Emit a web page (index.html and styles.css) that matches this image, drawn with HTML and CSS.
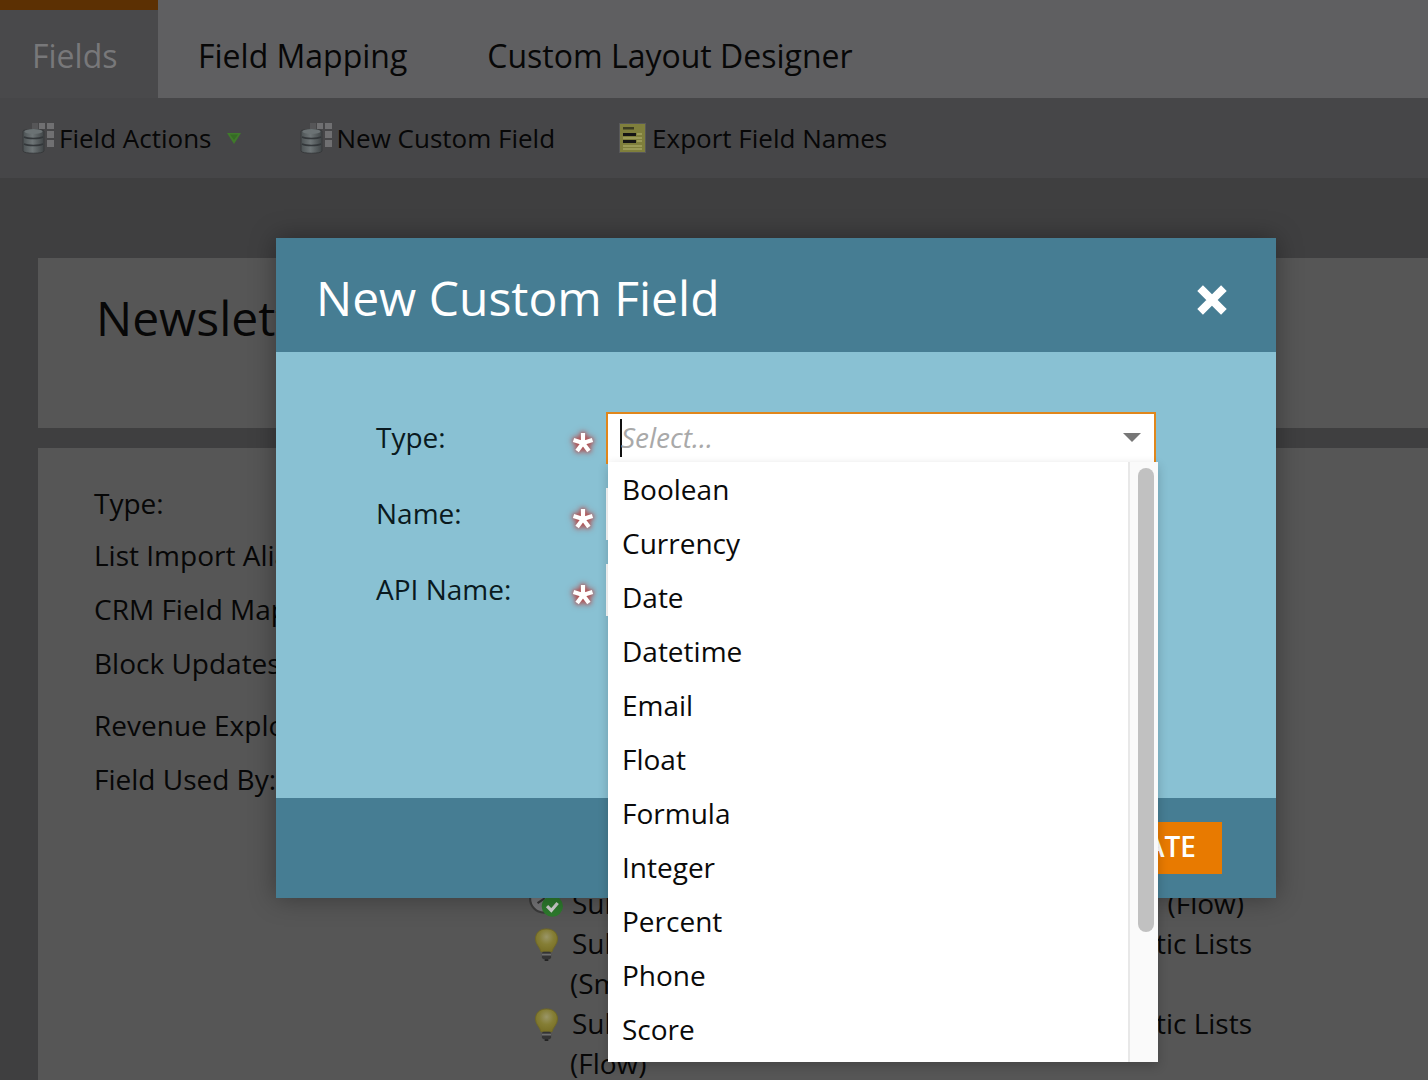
FILE: index.html
```html
<!DOCTYPE html>
<html lang="en">
<head>
<meta charset="utf-8">
<title>New Custom Field</title>
<link rel="stylesheet" href="styles.css">
</head>
<body>
<svg class="defs" width="0" height="0" aria-hidden="true">
  <defs>
    <radialGradient id="bulbfill" cx="50%" cy="35%" r="60%">
      <stop offset="0" stop-color="#9a9668"/><stop offset=".55" stop-color="#857e35"/><stop offset="1" stop-color="#7a7128"/>
    </radialGradient>
    <linearGradient id="cyl" x1="0" x2="1" y1="0" y2="0">
      <stop offset="0" stop-color="#4c5254"/><stop offset=".45" stop-color="#6e7577"/><stop offset="1" stop-color="#3f4446"/>
    </linearGradient>
    <symbol id="db" viewBox="0 0 32 32">
      <g fill="#707072">
        <rect x="10" y="1" width="6" height="6" fill="#565658"/><rect x="17" y="1" width="6" height="6"/><rect x="25" y="1" width="7" height="6"/>
        <rect x="25" y="9" width="7" height="7"/><rect x="25" y="18" width="7" height="7"/>
      </g>
      <path d="M1 9c0-2 21-2 21 0v20c0 3-21 3-21 0z" fill="url(#cyl)" stroke="#37393b"/>
      <ellipse cx="11.500" cy="9.500" rx="9" ry="2.500" fill="#6b7274"/>
      <path d="M2 15c4 2 15 2 19 0M2 22c4 2 15 2 19 0" fill="none" stroke="#33373a" stroke-width="1.500"/>
    </symbol>
    <symbol id="bulb" viewBox="0 0 26 36">
      <path d="M13 1C5 1 1 6 1 12c0 6 5 9 6 14h12c1-5 6-8 6-14 0-6-4-11-12-11z" fill="url(#bulbfill)" stroke="#6e6724"/>
      <rect x="8" y="26" width="10" height="8" rx="2" fill="#343434"/>
      <rect x="8" y="28" width="10" height="2" fill="#6f6f6f"/>
      <rect x="11" y="34" width="4" height="2" fill="#222"/>
    </symbol>
    <symbol id="star" viewBox="0 0 26 26">
      <path d="M13 3v10M13 13l9.500-3.100M13 13l5.900 8.100M13 13l-5.900 8.100M13 13L3.500 9.900" stroke="#fff" stroke-width="4.200" fill="none"/>
    </symbol>
  </defs>
</svg>

<header class="tabs">
  <a class="tab tab-active">Fields</a>
  <a class="tab">Field Mapping</a>
  <a class="tab">Custom Layout Designer</a>
</header>

<nav class="toolbar">
  <span class="tool tool-actions"><svg class="tool-icon"><use href="#db"/></svg>Field Actions<svg class="tool-caret" viewBox="0 0 14 12"><path d="M0 1h14L7 12z" fill="#3f7a2a"/><path d="M3 2.500h8L7 8z" fill="#356b24"/></svg></span>
  <span class="tool tool-new"><svg class="tool-icon"><use href="#db"/></svg>New Custom Field</span>
  <span class="tool"><svg class="tool-icon tool-icon-doc" viewBox="0 0 27 30"><rect x="0.500" y="0.500" width="26" height="29" fill="#7f7f3c" stroke="#58585a"/><rect x="4" y="4" width="11" height="2.500" fill="#3b3b22"/><rect x="4" y="10" width="13" height="3" fill="#151515"/><rect x="4" y="17" width="13" height="3" fill="#151515"/><path d="M4 15h19M4 23h19M18 11h5M18 18h5M4 26h19" stroke="#a5a560" stroke-width="1.500"/></svg>Export Field Names</span>
</nav>

<main class="content">
  <section class="panel panel-title"><h1>Newsletter Subscriber</h1></section>
  <section class="panel panel-detail">
    <dl class="labels">
      <dt class="label label-type">Type:</dt>
      <dt class="label">List Import Alias:</dt>
      <dt class="label">CRM Field Mapping:</dt>
      <dt class="label">Block Updates:</dt>
      <dt class="label label-revenue">Revenue Explorer:</dt>
      <dt class="label">Field Used By:</dt>
    </dl>
    <ul class="used">
      <li class="used-row"><svg class="used-icon" viewBox="0 0 34 30"><circle cx="15" cy="12" r="13" fill="#767678" stroke="#3a3a3a" stroke-width="2"/><path d="M15 3v9l-6 4" stroke="#333" stroke-width="2" fill="none"/><circle cx="23" cy="19" r="10" fill="#2d7a2d"/><path d="M18 19l4 4 6-7" stroke="#cfcfcf" stroke-width="3" fill="none"/></svg><span>Sub</span><span class="used-flow">(Flow)</span></li>
      <li class="used-row"><svg class="used-icon used-bulb"><use href="#bulb"/></svg><span>Sub</span><span>tic Lists</span></li>
      <li class="used-row used-wrap"><span>(Sm</span></li>
      <li class="used-row"><svg class="used-icon used-bulb"><use href="#bulb"/></svg><span>Sub</span><span>tic Lists</span></li>
      <li class="used-row used-wrap used-last"><span>(Flow)</span></li>
    </ul>
  </section>
</main>

<div class="modal" role="dialog">
  <div class="modal-head">
    <h2>New Custom Field</h2>
    <svg class="close" viewBox="0 0 30 30"><path d="M6.500 6.500l17 17M23.500 6.500l-17 17" stroke="#fff" stroke-width="7.500" stroke-linecap="square"/></svg>
  </div>
  <form class="modal-body">
    <div class="field">
      <label>Type:</label>
      <svg class="req"><use href="#star"/></svg>
      <div class="control control-focus">
        <span class="caret"></span><span class="placeholder">Select...</span>
        <svg class="arrow" viewBox="0 0 18 9"><path d="M0 0h18L9 9z" fill="#777"/></svg>
      </div>
    </div>
    <div class="field">
      <label>Name:</label>
      <svg class="req"><use href="#star"/></svg>
      <div class="control"></div>
    </div>
    <div class="field">
      <label>API Name:</label>
      <svg class="req"><use href="#star"/></svg>
      <div class="control"></div>
    </div>
  </form>
  <div class="modal-foot">
    <button class="create" type="button">CREATE</button>
  </div>
</div>

<div class="menu">
  <ul class="menu-list">
    <li>Boolean</li><li>Currency</li><li>Date</li><li>Datetime</li><li>Email</li><li>Float</li><li>Formula</li><li>Integer</li><li>Percent</li><li>Phone</li><li>Score</li>
  </ul>
  <div class="menu-track"><div class="menu-thumb"></div></div>
</div>
</body>
</html>
```
FILE: styles.css
```css
* { box-sizing: border-box; }
html, body { margin: 0; height: 1080px; overflow: hidden; }
body {
  background: #3f3f40;
  font-family: "Open Sans", "Liberation Sans", sans-serif;
  color: #070707;
  position: relative;
}
.defs { position: absolute; }

.tabs { display: flex; height: 98px; background: #5f5f61; }
.tab {
  display: flex; align-items: center;
  padding: 12px 40px 0;
  font-size: 32px;
  height: 98px;
}
.tab-active {
  width: 158px; padding: 2px 0 0 32px;
  background: #49494b;
  border-top: 10px solid #5c3003;
  color: #78787a;
}

.toolbar {
  display: flex; align-items: center;
  height: 80px;
  padding-left: 22px;
  background: #464648;
  font-size: 26px;
}
.tool { display: flex; align-items: center; white-space: nowrap; }
.tool-icon { width: 32px; height: 32px; margin-right: 5px; }
.tool-icon-doc { width: 27px; height: 30px; margin-right: 6px; }
.tool-actions { margin-right: 59px; }
.tool-new { margin-right: 64px; }
.tool-caret { width: 14px; height: 12px; margin-left: 15px; }

.content { padding: 80px 0 0 38px; }
.panel { background: #565656; }
.panel-title { height: 170px; margin-bottom: 20px; padding: 30px 0 0 58px; }
.panel-title h1 { margin: 0; font-weight: 400; font-size: 48px; line-height: 60px; white-space: nowrap; }
.panel-detail { height: 632px; position: relative; display: flex; padding-left: 56px; }

.labels { margin: 0; padding-top: 28px; width: 436px; font-size: 28px; }
.label { height: 54px; line-height: 54px; white-space: nowrap; }
.label-type { height: 52px; }
.label-revenue { margin-top: 8px; }

.used { list-style: none; margin: 0; padding: 435px 0 0; width: 722px; font-size: 28px; }
.used-row { position: relative; display: flex; justify-content: space-between; height: 40px; line-height: 40px; padding-left: 42px; white-space: nowrap; }
.used-wrap { padding-left: 40px; }
.used-flow { margin-right: 8px; }
.used-last { height: 32px; line-height: 32px; margin-top: 4px; }
.used-icon { position: absolute; left: -2px; top: 2px; width: 36px; height: 34px; }
.used-bulb { left: 4px; top: 5px; width: 25px; height: 33px; }

.modal {
  position: absolute; left: 276px; top: 238px;
  width: 1000px; height: 660px;
  display: flex; flex-direction: column;
  background: #89c1d3;
  box-shadow: 0 0 24px rgba(0,0,0,.35);
}
.modal-head {
  height: 114px; flex: none;
  display: flex; align-items: center; justify-content: space-between;
  padding: 6px 48px 0 40px;
  background: #467d93;
}
.modal-head h2 { margin: 0; font-size: 48px; font-weight: 400; color: #fff; line-height: 1; }
.close { width: 32px; height: 32px; margin-top: 3px; }
.modal-body { flex: 1; padding: 60px 0 0 100px; }
.field { display: flex; height: 52px; margin-bottom: 24px; font-size: 28px; color: #0a1a20; }
.field label { width: 194px; line-height: 50px; }
.req { width: 26px; height: 26px; margin: 18px 10px 0 0; flex: none; filter: drop-shadow(0 0 2px #b54a4a) drop-shadow(0 0 3px #b54a4a); }
.control { flex: none; width: 550px; background: #fff; position: relative; }
.control-focus { border: 2px solid #e0861c; display: flex; align-items: center; padding-left: 12px; }
.caret { width: 2px; height: 38px; background: #111; flex: none; }
.placeholder { font-style: italic; color: #a9a9a9; font-size: 28px; margin-left: -1px; margin-top: -2px; }
.arrow { position: absolute; right: 13px; top: 19px; width: 18px; height: 9px; }
.modal-foot {
  height: 100px; flex: none;
  display: flex; justify-content: flex-end; align-items: flex-start;
  padding: 24px 54px 0 0;
  background: #467d93;
}
.create {
  height: 52px; width: 200px; padding: 0 26px 4px 0; border: 0;
  background: #e87a00; color: #fff;
  font: 600 28px "Open Sans", sans-serif; text-align: right;
}

.menu {
  position: absolute; left: 608px; top: 462px;
  width: 550px; height: 600px;
  display: flex;
  background: #fff;
  box-shadow: 0 4px 10px rgba(0,0,0,.2);
}
.menu-list { list-style: none; margin: 0; padding: 0 0 0 14px; flex: 1; font-size: 28px; color: #0a0a0a; }
.menu-list li { height: 54px; line-height: 54px; }
.menu-track { width: 30px; padding: 6px 6px 0 8px; background: #fafafa; border-left: 2px solid #e8e8e8; }
.menu-thumb { width: 16px; height: 464px; border-radius: 8px; background: #c1c1c1; }
```
